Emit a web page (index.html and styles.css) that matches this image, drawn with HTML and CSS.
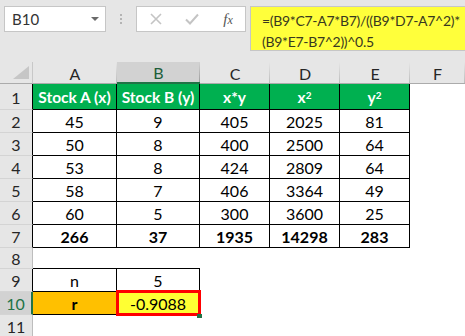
FILE: index.html
```html
<!DOCTYPE html>
<html>
<head>
<meta charset="utf-8">
<link rel="stylesheet" href="styles.css">
</head>
<body>
<div class="bar">
  <div class="namebox"><span class="name">B10</span><span class="caret"></span></div>
  <div class="sep"><i></i><i></i><i></i></div>
  <div class="fxbox">
    <span class="btn"><svg width="12" height="12" viewBox="0 0 12 12"><path d="M1 1L11 11M11 1L1 11" stroke="#c4c4c4" stroke-width="1.6" fill="none"/></svg></span>
    <span class="btn"><svg width="14" height="12" viewBox="0 0 14 12"><path d="M1 6.5L5 10.5L13 1.5" stroke="#c4c4c4" stroke-width="2" fill="none"/></svg></span>
    <span class="btn fx">f<span class="fxx">x</span></span>
  </div>
  <div class="formula">=(B9*C7-A7*B7)/((B9*D7-A7^2)*<br>(B9*E7-B7^2))^0.5</div>
</div>
<div class="sheet">
  <div class="corner"><svg width="16" height="13" viewBox="0 0 16 13"><path d="M16 0V13H0Z" fill="#c6c6c6"/></svg></div>
  <div class="ch">A</div><div class="ch sel">B</div><div class="ch">C</div><div class="ch">D</div><div class="ch">E</div><div class="ch">F</div>

  <div class="rh b">1</div>
  <div class="c g">Stock A (x)</div><div class="c g">Stock B (y)</div><div class="c g">x*y</div><div class="c g">x<sup>2</sup></div><div class="c g">y<sup>2</sup></div><div class="e"></div>

  <div class="rh b">2</div>
  <div class="c">45</div><div class="c">9</div><div class="c">405</div><div class="c">2025</div><div class="c">81</div><div class="e"></div>
  <div class="rh b">3</div>
  <div class="c">50</div><div class="c">8</div><div class="c">400</div><div class="c">2500</div><div class="c">64</div><div class="e"></div>
  <div class="rh b">4</div>
  <div class="c">53</div><div class="c">8</div><div class="c">424</div><div class="c">2809</div><div class="c">64</div><div class="e"></div>
  <div class="rh b">5</div>
  <div class="c">58</div><div class="c">7</div><div class="c">406</div><div class="c">3364</div><div class="c">49</div><div class="e"></div>
  <div class="rh b">6</div>
  <div class="c">60</div><div class="c">5</div><div class="c">300</div><div class="c">3600</div><div class="c">25</div><div class="e"></div>
  <div class="rh b">7</div>
  <div class="c bold">266</div><div class="c bold">37</div><div class="c bold">1935</div><div class="c bold">14298</div><div class="c bold">283</div><div class="e"></div>

  <div class="rh">8</div>
  <div class="e bb"></div><div class="e bb"></div><div class="e"></div><div class="e"></div><div class="e"></div><div class="e"></div>

  <div class="rh b">9</div>
  <div class="c">n</div><div class="c">5</div><div class="e"></div><div class="e"></div><div class="e"></div><div class="e"></div>

  <div class="rh selr">10</div>
  <div class="c orange bold">r</div><div class="c yellow">-0.9088<span class="handle"></span></div><div class="e"></div><div class="e"></div><div class="e"></div><div class="e"></div>

  <div class="rh">11</div>
  <div class="e"></div><div class="e"></div><div class="e"></div><div class="e"></div><div class="e"></div><div class="e"></div>
</div>
</body>
</html>
```
FILE: styles.css
```css
html, body {
  margin: 0;
  padding: 0;
}
body {
  width: 465px;
  height: 336px;
  overflow: hidden;
  background: #e6e6e6;
  font-family: Lato, "Liberation Sans", sans-serif;
  color: #000;
}

/* formula bar */
.bar {
  display: flex;
  align-items: flex-start;
  height: 62px;
  padding: 6px 0 0 4px;
  box-sizing: border-box;
}
.namebox {
  width: 102px;
  height: 26px;
  box-sizing: border-box;
  background: #fff;
  border: 1px solid #c6c6c6;
  display: flex;
  align-items: center;
  justify-content: space-between;
  padding: 0 6px 0 7px;
}
.name {
  font-size: 15px;
  color: #333;
}
.caret {
  width: 0;
  height: 0;
  border-left: 4px solid transparent;
  border-right: 4px solid transparent;
  border-top: 4px solid #6a6a6a;
}
.sep {
  width: 30px;
  height: 26px;
  display: flex;
  flex-direction: column;
  align-items: center;
  justify-content: center;
  gap: 2px;
}
.sep i {
  width: 2px;
  height: 2px;
  background: #b4b4b4;
}
.fxbox {
  width: 110px;
  height: 26px;
  box-sizing: border-box;
  background: #fff;
  border: 1px solid #c6c6c6;
  padding-left: 1px;
  display: grid;
  grid-template-columns: 36px 36px 36px;
  align-items: center;
}
.btn {
  display: flex;
  justify-content: center;
  align-items: center;
}
.fx {
  font-family: "Liberation Serif", serif;
  font-style: italic;
  font-size: 15px;
  color: #555;
}
.fxx {
  font-size: 12px;
  position: relative;
  top: 1px;
}
.formula {
  flex: 1;
  height: 45px;
  margin-left: 4px;
  background: #ffff3b;
  border: 1px solid #c6c6c6;
  border-right: none;
  box-sizing: border-box;
  padding: 3px 0 0 11px;
  font-size: 14px;
  letter-spacing: -0.3px;
  line-height: 21px;
  color: #38381f;
  white-space: nowrap;
  overflow: hidden;
}

/* sheet */
.sheet {
  display: grid;
  grid-template-columns: 33px 84px 83px 70px 70px 70px 1fr;
  grid-template-rows: 22px 26px repeat(6, 23px) 21px 23px 23px 23px;
  background: #fff;
}
.sheet > div {
  box-sizing: border-box;
  display: flex;
  align-items: center;
  justify-content: center;
  font-size: 16px;
}
.corner {
  background: #e6e6e6;
  border-right: 1px solid #c8c8c8;
  border-bottom: 1px solid #ababab;
  align-items: flex-end !important;
  justify-content: flex-end !important;
  padding: 0 3px 4px 0;
}
.corner svg {
  display: block;
}
.ch {
  background: linear-gradient(#e6e6e6, #bcbcbc) right / 1px 100% no-repeat, #e6e6e6;
  border-bottom: 1px solid #ababab;
  color: #262626;
  padding-top: 1px;
}
.ch.sel {
  background: linear-gradient(#d2d2d2, #9c9c9c) right / 1px 100% no-repeat, #d2d2d2;
  border-bottom: 2px solid #217346;
  color: #1d5e3a;
}
.rh {
  background: #e6e6e6;
  border-right: 1px solid #bdbdbd;
  border-bottom: 1px solid #d4d4d4;
  color: #262626;
  padding-top: 1px;
}
.rh.b {
  border-right-color: #000;
}
.rh.selr {
  background: #d2d2d2;
  color: #217346;
  border-right: 2px solid #217346;
}
.c {
  border-right: 1px solid #000;
  border-bottom: 1px solid #000;
  padding-top: 1px;
  position: relative;
}
.g {
  background: #00b050;
  color: #fff;
  font-weight: 700;
  font-size: 15.5px !important;
  white-space: nowrap;
}
.g sup {
  font-size: 10px;
  line-height: 0;
  position: relative;
  top: -2px;
}
.bold {
  font-weight: 700;
}
.e {
  background: #fff;
}
.bb {
  border-bottom: 1px solid #000;
}
.orange {
  background: #ffc000;
}
.yellow {
  background: #ffff33;
}
.yellow::after {
  content: "";
  position: absolute;
  left: -1px;
  top: -2px;
  right: -2px;
  bottom: -2px;
  border: 3px solid #ff0000;
}
.handle {
  position: absolute;
  right: -3px;
  bottom: -4px;
  width: 5px;
  height: 4px;
  background: #217346;
  z-index: 2;
}
```
